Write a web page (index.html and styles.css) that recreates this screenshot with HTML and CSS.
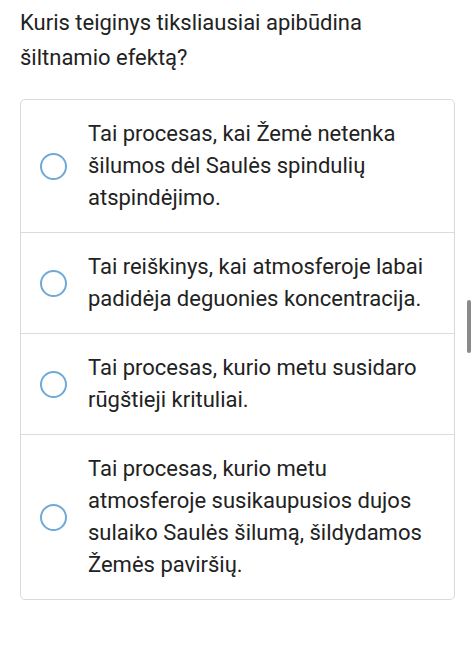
FILE: index.html
```html
<!DOCTYPE html>
<html lang="lt">
<head>
<meta charset="utf-8">
<link rel="stylesheet" href="styles.css">
</head>
<body>
<div class="page">
  <h1 class="question">Kuris teiginys tiksliausiai apibūdina šiltnamio efektą?</h1>
  <div class="options">
    <label class="option">
      <span class="radio"></span>
      <span class="text">Tai procesas, kai Žemė netenka šilumos dėl Saulės spindulių atspindėjimo.</span>
    </label>
    <label class="option">
      <span class="radio"></span>
      <span class="text">Tai reiškinys, kai atmosferoje labai padidėja deguonies koncentracija.</span>
    </label>
    <label class="option">
      <span class="radio"></span>
      <span class="text">Tai procesas, kurio metu susidaro rūgštieji krituliai.</span>
    </label>
    <label class="option">
      <span class="radio"></span>
      <span class="text">Tai procesas, kurio metu atmosferoje susikaupusios dujos sulaiko Saulės šilumą, šildydamos Žemės paviršių.</span>
    </label>
  </div>
</div>
<div class="scrollbar"></div>
</body>
</html>
```

FILE: styles.css
```css
html, body {
  margin: 0;
  padding: 0;
  background: #ffffff;
}
body {
  font-family: Roboto, "Noto Sans", sans-serif;
  color: #222222;
}
.page {
  padding: 5px 19px 0 20px;
}
.question {
  margin: 0;
  font-size: 22px;
  font-weight: 400;
  line-height: 35px;
  width: 400px;
}
.options {
  margin-top: 24px;
  border: 1px solid #d9d9d9;
  border-radius: 5px;
  overflow: hidden;
}
.option {
  display: flex;
  align-items: center;
  padding: 18px 16px 18px 19px;
  border-top: 1px solid #dcdcdc;
}
.option:first-child {
  border-top: none;
}
.radio {
  flex: none;
  width: 23px;
  height: 23px;
  border: 2px solid #6ea9d8;
  border-radius: 50%;
  margin-right: 21px;
}
.text {
  font-size: 22px;
  line-height: 32px;
  max-width: 345px;
}
.scrollbar {
  position: absolute;
  left: 467px;
  top: 300px;
  width: 4px;
  height: 53px;
  background: #8a8a8a;
  border-radius: 2px;
}
```
